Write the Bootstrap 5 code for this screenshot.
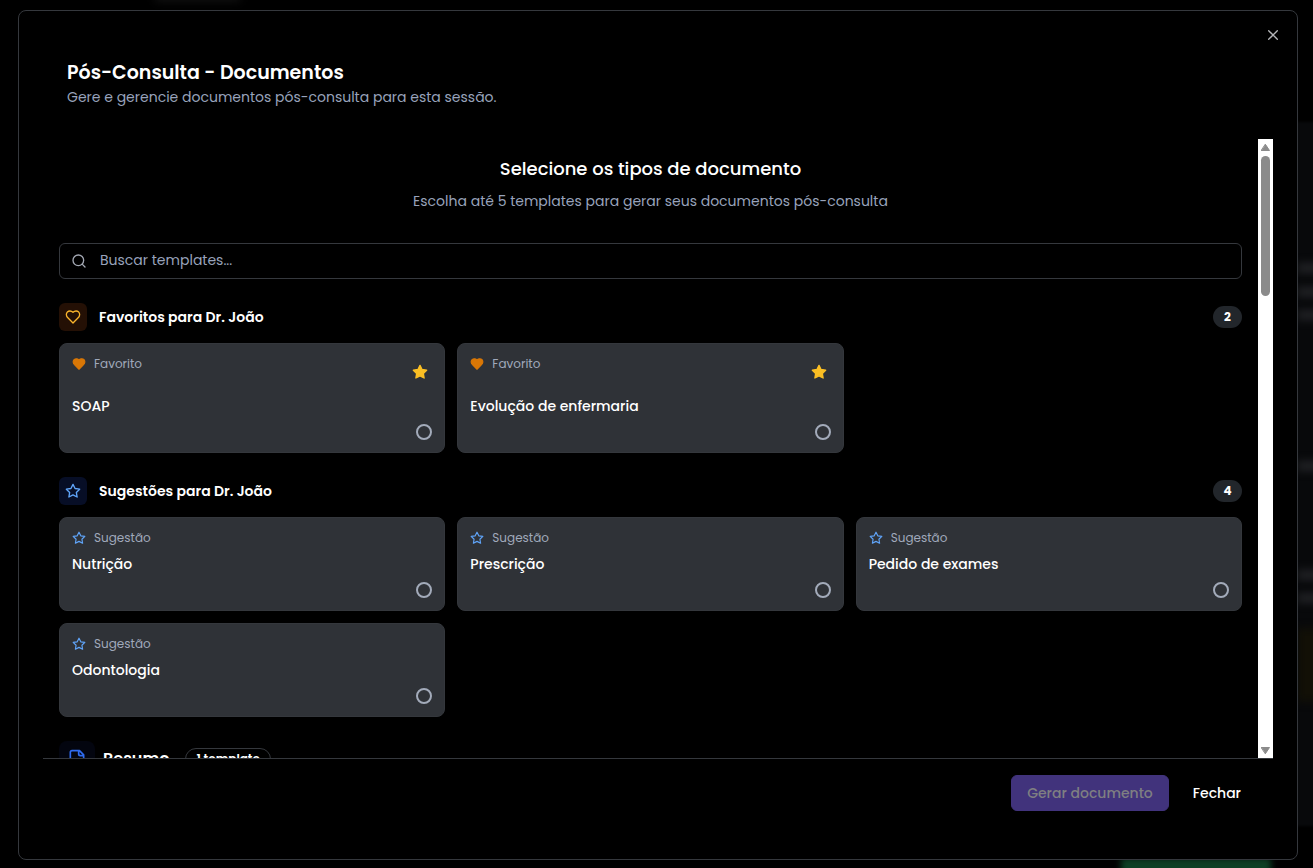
<!DOCTYPE html>
<html lang="pt-BR">
<head>
<meta charset="utf-8">
<meta name="viewport" content="width=device-width, initial-scale=1">
<title>Pós-Consulta - Documentos</title>
<link href="https://cdn.jsdelivr.net/npm/bootstrap@5.3.0/dist/css/bootstrap.min.css" rel="stylesheet">
<style>
  :root { --muted: #98a3bb; --line: #35383d; --panel: #2f3237; }
  body { background: #000; color: #fff; font-family: Poppins, Inter, sans-serif; font-size: 14px; line-height: 20px; overflow: hidden; }
  svg { display: block; flex: none; fill: none; stroke: currentColor; stroke-width: 2; stroke-linecap: round; stroke-linejoin: round; }

  /* dimmed page behind the dialog */
  .backdrop-page { position: absolute; inset: 0; overflow: hidden; z-index: 0; }
  .ghost { position: absolute; filter: blur(4px); background: #212225; height: 10px; right: -10px; width: 26px; }
  .ghost-panel { top: 122px; bottom: 42px; width: 60px; right: -40px; height: auto; background: #08090b; filter: blur(1px); }
  .ghost-gold { height: 74px; background: #121006; }
  .ghost-green { top: auto; bottom: -20px; right: 42px; width: 150px; height: 30px; background: #0c3f24; filter: blur(3px); }
  .ghost-tab { top: -8px; right: auto; left: 155px; width: 85px; background: #101010; }

  .dialog { position: relative; z-index: 1; height: 100vh; padding: 10px 15px 8px 18px; }
  .dialog-box { background: #000; border: 1px solid var(--line); border-radius: 8px; padding: 24px; height: 100%; position: relative; }
  .dismiss { position: absolute; top: 16px; right: 16px; width: 16px; height: 16px; color: #b4b5b8; padding: 0; border: 0; background: none; }
  .dialog-title { font-size: 19px; line-height: 28px; font-weight: 600; margin: 0; }
  .dialog-head { padding: 24px 24px 32px; }
  .soft { color: var(--muted); }
  .body-scroll { overflow-y: auto; scrollbar-width: none; padding: 16px; }
  .body-scroll::-webkit-scrollbar { display: none; }
  .lead-title { font-size: 18px; line-height: 28px; font-weight: 500; margin: 0 0 8px; }

  .track { width: 15px; background: #fff; padding: 5px 3px 4px; }
  .track .thumb { width: 9px; height: 23%; border-radius: 5px; background: #8b8b8b; margin: 5px 0 auto; }
  .track svg { fill: #8b8b8b; stroke: #8b8b8b; stroke-width: 1; }

  .search { border: 1px solid var(--line); border-radius: 6px; height: 36px; padding: 0 11px; gap: 13px; margin-top: 32px; color: #a3a8b3; }
  .search input { background: none; border: 0; outline: 0; color: #fff; font-size: 14px; line-height: 20px; padding: 0 0 2px; }
  .search input::placeholder { color: var(--muted); opacity: 1; }

  .group { margin-top: 24px; }
  .group-head { gap: 12px; margin-bottom: 12px; }
  .group-head h3, .pick-name { font-size: 14px; line-height: 20px; font-weight: 600; margin: 0; }
  .pick-name { font-weight: 500; }
  .tile { width: 28px; height: 28px; border-radius: 6px; }
  .tile-amber { background: #241005; color: #fbb52c; }
  .tile-blue { background: #070e26; color: #60a5fa; }
  .tile-navy { width: 36px; height: 36px; border-radius: 8px; background: #03050f; color: #2f6bee; }
  .count { background: #22262b; border-radius: 11px; padding: 1px 10px; font-size: 12px; font-weight: 700; min-width: 29px; text-align: center; }
  .cards { --bs-gutter-x: 12px; --bs-gutter-y: 12px; }
  .pick { background: var(--panel); border: 1px solid #34373c; border-radius: 8px; padding: 12px; gap: 8px; cursor: pointer; height: 100%; }
  .tag { color: #a0a9bb; font-size: 12px; line-height: 16px; gap: 8px; height: 16px; }
  .heart { fill: #d97706; stroke: #d97706; }
  .sug { color: #60a5fa; }
  .fav { width: 24px; height: 32px; padding: 0; border: 0; background: none; color: #fbbf24; }
  .fav svg { fill: currentColor; }
  .pick input { appearance: none; width: 16px; height: 16px; border: 2px solid #a3abba; border-radius: 50%; margin: 0; }
  .pick input:checked { background: #6d5bd0; }
  .pill { border: 1px solid var(--line); border-radius: 12px; padding: 0 10px; font-size: 12px; font-weight: 600; }

  .dialog-foot { border-top: 1px solid var(--line); padding: 16px 16px 24px; gap: 8px; }
  .dialog-foot .btn { font-size: 14px; line-height: 20px; font-weight: 500; padding: 7px 15px; border-radius: 6px; color: #fff; }
  .dialog-foot .btn-main:disabled { background: #41337c; border-color: #41337c; color: #7f7f82; opacity: 1; }
</style>
</head>
<body>
<svg class="d-none" aria-hidden="true">
  <symbol id="heart" viewBox="0 0 24 24"><path d="M19 14c1.49-1.46 3-3.21 3-5.5A5.5 5.5 0 0 0 16.5 3c-1.76 0-3 .5-4.5 2-1.5-1.5-2.74-2-4.5-2A5.5 5.5 0 0 0 2 8.5c0 2.3 1.5 4.05 3 5.5l7 7Z"/></symbol>
  <symbol id="star" viewBox="0 0 24 24"><path d="M12 2l3.09 6.26L22 9.27l-5 4.87 1.18 6.88L12 17.77l-6.18 3.25L7 14.14 2 9.27l6.91-1.01L12 2z"/></symbol>
</svg>

<div class="backdrop-page" aria-hidden="true">
  <div class="ghost ghost-tab"></div>
  <div class="ghost ghost-panel"></div>
  <div class="ghost" style="top:263px"></div>
  <div class="ghost" style="top:287px"></div>
  <div class="ghost" style="top:310px"></div>
  <div class="ghost" style="top:461px"></div>
  <div class="ghost" style="top:570px"></div>
  <div class="ghost" style="top:593px"></div>
  <div class="ghost ghost-gold" style="top:628px"></div>
  <div class="ghost ghost-green"></div>
</div>

<main class="dialog" role="dialog" aria-labelledby="dlg-title">
  <div class="dialog-box d-flex flex-column">
    <button class="dismiss" type="button" aria-label="Fechar janela"><svg width="16" height="16" viewBox="0 0 24 24"><path d="M18.5 5.5l-13 13M5.5 5.5l13 13"/></svg></button>

    <header class="dialog-head">
      <h1 class="dialog-title" id="dlg-title">Pós-Consulta - Documentos</h1>
      <p class="soft mb-0">Gere e gerencie documentos pós-consulta para esta sessão.</p>
    </header>

    <div class="d-flex flex-fill overflow-hidden">
      <div class="body-scroll flex-fill">
        <div class="text-center">
          <h2 class="lead-title">Selecione os tipos de documento</h2>
          <p class="soft mb-0">Escolha até 5 templates para gerar seus documentos pós-consulta</p>
        </div>
        <label class="search d-flex align-items-center w-100">
          <svg width="16" height="16" viewBox="0 0 24 24"><circle cx="11" cy="11" r="8"/><path d="m21 21-4.3-4.3"/></svg>
          <input class="flex-fill" type="text" placeholder="Buscar templates..." aria-label="Buscar templates">
        </label>

        <section class="group">
          <div class="group-head d-flex align-items-center">
            <span class="tile tile-amber d-flex align-items-center justify-content-center"><svg width="16" height="16"><use href="#heart"/></svg></span>
            <h3>Favoritos para Dr. João</h3>
            <span class="count ms-auto">2</span>
          </div>
          <div class="row row-cols-3 cards">
            <div class="col"><div class="pick d-flex flex-column">
              <div class="d-flex justify-content-between"><span class="tag d-flex align-items-center"><svg class="heart" width="14" height="14"><use href="#heart"/></svg>Favorito</span>
                <button class="fav d-flex align-items-center justify-content-center" type="button" aria-label="Remover dos favoritos"><svg width="16" height="16"><use href="#star"/></svg></button></div>
              <label class="pick-name" for="t1">SOAP</label><input class="align-self-end" type="checkbox" id="t1">
            </div></div>
            <div class="col"><div class="pick d-flex flex-column">
              <div class="d-flex justify-content-between"><span class="tag d-flex align-items-center"><svg class="heart" width="14" height="14"><use href="#heart"/></svg>Favorito</span>
                <button class="fav d-flex align-items-center justify-content-center" type="button" aria-label="Remover dos favoritos"><svg width="16" height="16"><use href="#star"/></svg></button></div>
              <label class="pick-name" for="t2">Evolução de enfermaria</label><input class="align-self-end" type="checkbox" id="t2">
            </div></div>
          </div>
        </section>

        <section class="group">
          <div class="group-head d-flex align-items-center">
            <span class="tile tile-blue d-flex align-items-center justify-content-center"><svg width="16" height="16"><use href="#star"/></svg></span>
            <h3>Sugestões para Dr. João</h3>
            <span class="count ms-auto">4</span>
          </div>
          <div class="row row-cols-3 cards">
            <div class="col"><div class="pick d-flex flex-column">
              <span class="tag d-flex align-items-center"><svg class="sug" width="14" height="14"><use href="#star"/></svg>Sugestão</span>
              <label class="pick-name" for="t3">Nutrição</label><input class="align-self-end" type="checkbox" id="t3">
            </div></div>
            <div class="col"><div class="pick d-flex flex-column">
              <span class="tag d-flex align-items-center"><svg class="sug" width="14" height="14"><use href="#star"/></svg>Sugestão</span>
              <label class="pick-name" for="t4">Prescrição</label><input class="align-self-end" type="checkbox" id="t4">
            </div></div>
            <div class="col"><div class="pick d-flex flex-column">
              <span class="tag d-flex align-items-center"><svg class="sug" width="14" height="14"><use href="#star"/></svg>Sugestão</span>
              <label class="pick-name" for="t5">Pedido de exames</label><input class="align-self-end" type="checkbox" id="t5">
            </div></div>
            <div class="col"><div class="pick d-flex flex-column">
              <span class="tag d-flex align-items-center"><svg class="sug" width="14" height="14"><use href="#star"/></svg>Sugestão</span>
              <label class="pick-name" for="t6">Odontologia</label><input class="align-self-end" type="checkbox" id="t6">
            </div></div>
          </div>
        </section>

        <section class="group">
          <div class="d-flex align-items-center gap-2">
            <span class="tile tile-navy d-flex align-items-center justify-content-center"><svg width="20" height="20" viewBox="0 0 24 24"><path d="M15 2H6a2 2 0 0 0-2 2v16a2 2 0 0 0 2 2h12a2 2 0 0 0 2-2V7ZM14 2v4a2 2 0 0 0 2 2h4M16 13H8M16 17H8"/></svg></span>
            <h3 class="dialog-title fs-6">Resumo</h3>
            <span class="pill ms-2">1 template</span>
          </div>
        </section>
      </div>

      <div class="track d-flex flex-column align-items-center" aria-hidden="true">
        <svg width="9" height="7" viewBox="0 0 9 7"><path d="M4.5 .5 8.500 6.500H.5Z"/></svg>
        <div class="thumb"></div>
        <svg width="9" height="7" viewBox="0 0 9 7"><path d="M4.5 6.500 8.500 .5H.5Z"/></svg>
      </div>
    </div>

    <footer class="dialog-foot d-flex justify-content-end">
      <button class="btn btn-main" type="button" disabled>Gerar documento</button>
      <button class="btn" type="button">Fechar</button>
    </footer>
  </div>
</main>
<script src="https://cdn.jsdelivr.net/npm/bootstrap@5.3.0/dist/js/bootstrap.bundle.min.js"></script>
</body>
</html>
